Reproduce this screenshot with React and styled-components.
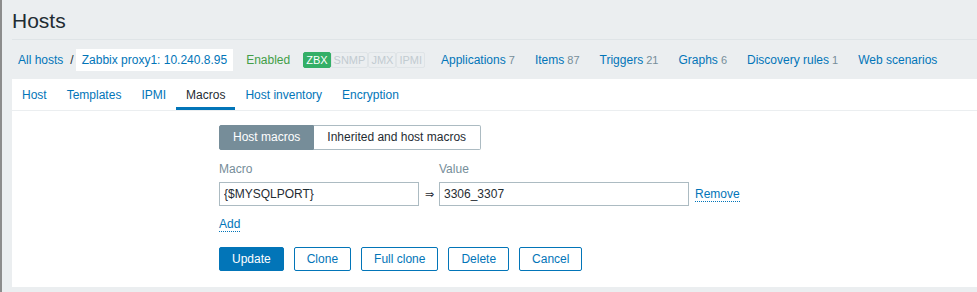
import React from 'react';
import styled, { createGlobalStyle } from 'styled-components';

const GlobalStyle = createGlobalStyle`
  body {
    margin: 0;
    background-color: #ebeef0;
    font-family: "Liberation Sans", Arial, sans-serif;
    font-size: 12px;
    color: #1f2c33;
  }
`;

const Page = styled.div`
  border-left: 2px solid #8c8c8c;
  padding-left: 10px;
  min-height: 292px;
  box-sizing: border-box;
`;

const Header = styled.header`
  border-bottom: 1px solid #dfe4e7;
  padding: 9px 0 6px;
`;

const Title = styled.h1`
  margin: 0;
  font-size: 21px;
  line-height: 24px;
  font-weight: normal;
  color: #1f2c33;
`;

const Nav = styled.nav`
  display: flex;
  align-items: center;
  height: 39px;
  padding: 1px 0 0 6px;
  box-sizing: border-box;
`;

const Link = styled.a`
  color: #0275b8;
  text-decoration: none;
  cursor: pointer;
  margin-left: ${(p) => p.$gap || 0}px;
  white-space: nowrap;
`;

const Slash = styled.span`
  color: #1f2c33;
  margin: 0 2px 0 7px;
`;

const Current = styled.span`
  background: #fff;
  color: #0275b8;
  padding: 0 6px;
  line-height: 22px;
  white-space: nowrap;
`;

const Status = styled.span`
  color: #429e47;
  margin-left: 13px;
`;

const Badges = styled.div`
  display: flex;
  margin-left: 13px;
`;

const Badge = styled.span`
  font-size: 11px;
  line-height: 14px;
  padding: 0 2px;
  border: 1px solid ${(p) => (p.$on ? '#34af67' : '#dfe4e7')};
  background: ${(p) => (p.$on ? '#34af67' : 'transparent')};
  color: ${(p) => (p.$on ? '#fff' : '#c2cbd0')};
  border-radius: 2px;
`;

const Count = styled.span`
  color: #768d99;
  font-size: 11px;
`;

const Panel = styled.div`
  background: #fff;
`;

const Tabs = styled.ul`
  display: flex;
  margin: 0;
  padding: 0;
  list-style: none;
  border-bottom: 1px solid #ebeef0;
`;

const Tab = styled.li`
  padding: 4px 10px 0;
  line-height: 24px;
  border-bottom: 3px solid ${(p) => (p.$active ? '#0275b8' : 'transparent')};
  color: ${(p) => (p.$active ? '#1f2c33' : '#0275b8')};
  cursor: pointer;
`;

const Form = styled.div`
  padding: 14px 0 16px 207px;
`;

const Segmented = styled.div`
  display: flex;
`;

const Segment = styled.span`
  height: 25px;
  box-sizing: border-box;
  line-height: 23px;
  padding: 0 13px;
  border: 1px solid ${(p) => (p.$active ? '#768d99' : '#acbbc2')};
  background: ${(p) => (p.$active ? '#768d99' : '#fff')};
  color: ${(p) => (p.$active ? '#fff' : '#1f2c33')};
  border-radius: ${(p) => (p.$first ? '2px 0 0 2px' : '0 2px 2px 0')};
  ${(p) => (!p.$first ? 'border-left: none; padding-right: 14px;' : '')}
`;

const MacroTable = styled.div`
  display: grid;
  grid-template-columns: 200px 20px 250px auto;
  row-gap: 6px;
  margin-top: 11px;
  align-items: center;
`;

const Label = styled.span`
  color: #768d99;
  line-height: 14px;
  padding-top: 1px;
`;

const Input = styled.input`
  height: 24px;
  box-sizing: border-box;
  border: 1px solid #acbbc2;
  padding: 0 4px;
  font-family: inherit;
  font-size: 12px;
  color: #1f2c33;
  outline: none;
  width: 100%;
`;

const Arrow = styled.span`
  text-align: center;
  color: #1f2c33;
  font-size: 11px;
`;

const DottedLink = styled.a`
  color: #0275b8;
  border-bottom: 1px dotted #0275b8;
  margin-left: ${(p) => p.$indent || 0}px;
  justify-self: start;
  line-height: 14px;
  cursor: pointer;
`;

const AddRow = styled.div`
  margin-top: 11px;
  line-height: 14px;
`;

const Buttons = styled.div`
  display: flex;
  gap: 10px;
  margin-top: 16px;
`;

const Button = styled.button`
  height: 24px;
  padding: 0 12px;
  border-radius: 2px;
  border: 1px solid #0275b8;
  background: ${(p) => (p.$primary ? '#0275b8' : '#fff')};
  color: ${(p) => (p.$primary ? '#fff' : '#0275b8')};
  font-family: inherit;
  font-size: 12px;
  cursor: pointer;
`;

const navLinks = [
  ['Applications', 7],
  ['Items', 87],
  ['Triggers', 21],
  ['Graphs', 6],
  ['Discovery rules', 1],
  ['Web scenarios'],
];

const tabs = ['Host', 'Templates', 'IPMI', 'Macros', 'Host inventory', 'Encryption'];

export default function App() {
  return (
    <Page>
      <GlobalStyle />
      <Header>
        <Title>Hosts</Title>
      </Header>
      <Nav>
        <Link>All hosts</Link>
        <Slash>/</Slash>
        <Current>Zabbix proxy1: 10.240.8.95</Current>
        <Status>Enabled</Status>
        <Badges>
          <Badge $on>ZBX</Badge>
          <Badge>SNMP</Badge>
          <Badge>JMX</Badge>
          <Badge>IPMI</Badge>
        </Badges>
        {navLinks.map(([name, count], i) => (
          <Link key={name} $gap={i === 0 ? 16 : 20}>
            {name}
            {count !== undefined && <Count> {count}</Count>}
          </Link>
        ))}
      </Nav>
      <Panel>
        <Tabs>
          {tabs.map((t) => (
            <Tab key={t} $active={t === 'Macros'}>{t}</Tab>
          ))}
        </Tabs>
        <Form>
          <Segmented>
            <Segment $active $first>Host macros</Segment>
            <Segment>Inherited and host macros</Segment>
          </Segmented>
          <MacroTable>
            <Label>Macro</Label>
            <span />
            <Label>Value</Label>
            <span />
            <Input defaultValue="{$MYSQLPORT}" />
            <Arrow>⇒</Arrow>
            <Input defaultValue="3306_3307" />
            <DottedLink $indent={6}>Remove</DottedLink>
          </MacroTable>
          <AddRow>
            <DottedLink>Add</DottedLink>
          </AddRow>
          <Buttons>
            <Button $primary>Update</Button>
            <Button>Clone</Button>
            <Button>Full clone</Button>
            <Button>Delete</Button>
            <Button>Cancel</Button>
          </Buttons>
        </Form>
      </Panel>
    </Page>
  );
}
